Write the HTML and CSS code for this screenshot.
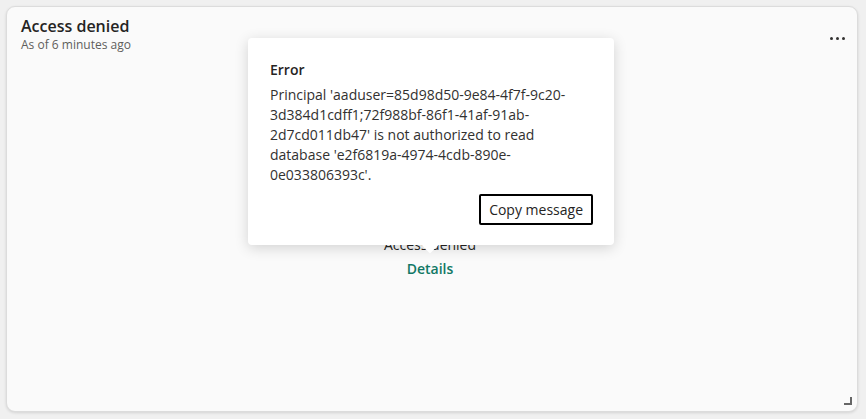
FILE: index.html
```html
<!DOCTYPE html>
<html>
<head>
<meta charset="utf-8">
<link rel="stylesheet" href="styles.css">
</head>
<body>
<div class="card">
  <div class="header">
    <div class="titles">
      <div class="title">Access denied</div>
      <div class="subtitle">As of 6 minutes ago</div>
    </div>
    <div class="more"><span></span><span></span><span></span></div>
  </div>
  <div class="center">
    <div class="msg">Access denied</div>
    <div class="details">Details</div>
  </div>
  <div class="resize"></div>
  <div class="popup">
    <div class="ptitle">Error</div>
    <div class="ptext">Principal 'aaduser=85d98d50-9e84-4f7f-9c20-3d384d1cdff1;72f988bf-86f1-41af-91ab-2d7cd011db47' is not authorized to read database 'e2f6819a-4974-4cdb-890e-0e033806393c'.</div>
    <div class="actions"><button class="copy">Copy message</button></div>
    <div class="arrow"></div>
  </div>
</div>
</body>
</html>
```
FILE: styles.css
```css
html, body { margin: 0; padding: 0; }
body {
  background: #f0f0f0;
  font-family: "Segoe UI", "Open Sans", "Noto Sans", sans-serif;
  padding: 6px 8px 7px 6px;
  height: 419px;
  box-sizing: border-box;
}
.card {
  position: relative;
  height: 406px;
  background: #fafafa;
  border: 1px solid #dcdcdc;
  border-radius: 9px;
  box-shadow: 0 1px 3px rgba(0,0,0,0.12);
  box-sizing: border-box;
  display: flex;
  flex-direction: column;
}
.header {
  display: flex;
  justify-content: space-between;
  padding: 8px 12px 0 14px;
}
.title {
  font-size: 16px;
  font-weight: 600;
  color: #252423;
  line-height: 22px;
}
.subtitle {
  font-size: 12px;
  color: #605e5c;
  line-height: 16px;
}
.more {
  display: flex;
  gap: 3px;
  padding-top: 22px;
}
.more span {
  width: 3px; height: 3px; border-radius: 50%; background: #323130;
}
.center {
  margin-top: 182px;
  display: flex;
  flex-direction: column;
  align-items: center;
  width: 846px;
}
.msg { font-size: 14px; color: #252423; line-height: 20px; }
.details { font-size: 14px; color: #117865; font-weight: 600; line-height: 20px; margin-top: 4px; }
.resize {
  position: absolute;
  right: 5px;
  bottom: 6px;
  width: 8px;
  height: 8px;
  border-right: 2px solid #666;
  border-bottom: 2px solid #666;
  box-sizing: border-box;
}
.popup {
  position: absolute;
  left: 241px;
  top: 31px;
  width: 366px;
  box-sizing: border-box;
  background: #fff;
  border-radius: 4px;
  box-shadow: 0 3px 14px rgba(0,0,0,0.16);
  padding: 21px 21px 20px 22px;
  color: #252423;
}
.ptitle { font-size: 14px; font-weight: 600; line-height: 22px; margin-bottom: 4px; }
.ptext { font-size: 14px; line-height: 20px; color: #323130; }
.actions { display: flex; justify-content: flex-end; margin-top: 9px; }
.copy {
  font-family: inherit;
  font-size: 14px;
  color: #252423;
  background: #fff;
  border: 2px solid #000;
  border-radius: 2px;
  padding: 2px 8px;
  height: 31px;
}
.arrow {
  position: absolute;
  left: 176px;
  bottom: -6px;
  width: 12px;
  height: 12px;
  background: #fff;
  transform: rotate(45deg);
}
```
